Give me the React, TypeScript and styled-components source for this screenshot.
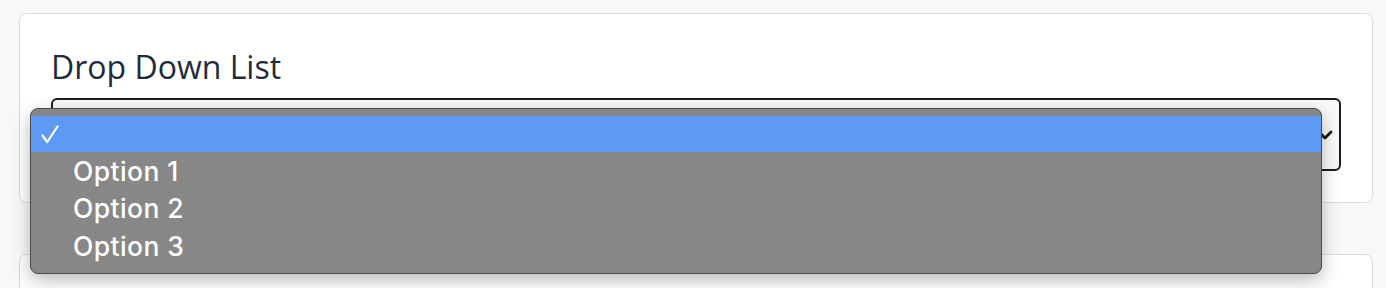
import React from "react";
import styled, { createGlobalStyle } from "styled-components";

const Global = createGlobalStyle`
  html, body { margin: 0; padding: 0; background: #f8f8f8; }
  body { font-family: "Open Sans", "Liberation Sans", sans-serif; overflow: hidden; }
`;

const Page = styled.div`
  display: flex;
  flex-direction: column;
  gap: 51px;
  padding: 13px 13px 0 19px;
`;

const Card = styled.section<{ $tall?: boolean }>`
  background: #fff;
  border: 1px solid #dcdcdc;
  border-radius: 8px;
  padding: ${(p) => (p.$tall ? "0" : "31px 31px 31px 31px")};
  min-height: ${(p) => (p.$tall ? "80px" : "auto")};
`;

const Title = styled.h2`
  margin: 0 0 10px;
  font-family: "Open Sans", sans-serif;
  font-weight: 400;
  font-size: 32px;
  line-height: 43px;
  color: #1f2c3c;
`;

const SelectWrap = styled.div`
  position: relative;
`;

const SelectBox = styled.div`
  height: 69px;
  border: 2px solid #1c1c1c;
  border-radius: 6px;
  background: #f9f9f9;
  display: flex;
  align-items: center;
  justify-content: flex-end;
  padding-right: 6px;
`;

const Popup = styled.ul`
  position: absolute;
  left: -21px;
  top: 10px;
  width: 1292px;
  margin: 0;
  padding: 7px 0 8px;
  list-style: none;
  background: #878787;
  border: 1px solid #4a4a4a;
  border-radius: 8px;
  box-shadow: 0 6px 18px rgba(0, 0, 0, 0.28);
  box-sizing: border-box;
  overflow: hidden;
`;

const Option = styled.li<{ $active?: boolean }>`
  display: flex;
  align-items: center;
  height: ${(p) => (p.$active ? "36px" : "37.5px")};
  padding-left: 12px;
  background: ${(p) => (p.$active ? "#5c9af5" : "transparent")};
  color: #fff;
  font-family: "Inter", "Liberation Sans", sans-serif;
  font-weight: 500;
  font-size: 26.5px;
  letter-spacing: 0.4px;
`;

const CheckSlot = styled.span`
  width: 30px;
  display: flex;
  align-items: center;
  svg { margin-left: -2px; }
`;

const options = ["Option 1", "Option 2", "Option 3"];

export default function App() {
  return (
    <>
      <Global />
      <Page>
        <Card>
          <Title>Drop Down List</Title>
          <SelectWrap>
            <SelectBox>
              <svg width="16" height="12" viewBox="0 0 16 12">
                <path d="M2 3 L8 9 L14 3" fill="none" stroke="#111" strokeWidth="2.8" strokeLinecap="round" strokeLinejoin="round" />
              </svg>
            </SelectBox>
            <Popup>
              <Option $active>
                <CheckSlot>
                  <svg width="18" height="19" viewBox="0 0 18 19">
                    <path d="M1.5 10.5 L6.3 17 L16.5 1.5" fill="none" stroke="#fff" strokeWidth="2.2" strokeLinecap="round" strokeLinejoin="round" />
                  </svg>
                </CheckSlot>
              </Option>
              {options.map((o) => (
                <Option key={o}>
                  <CheckSlot />
                  {o}
                </Option>
              ))}
            </Popup>
          </SelectWrap>
        </Card>
        <Card $tall />
      </Page>
    </>
  );
}
